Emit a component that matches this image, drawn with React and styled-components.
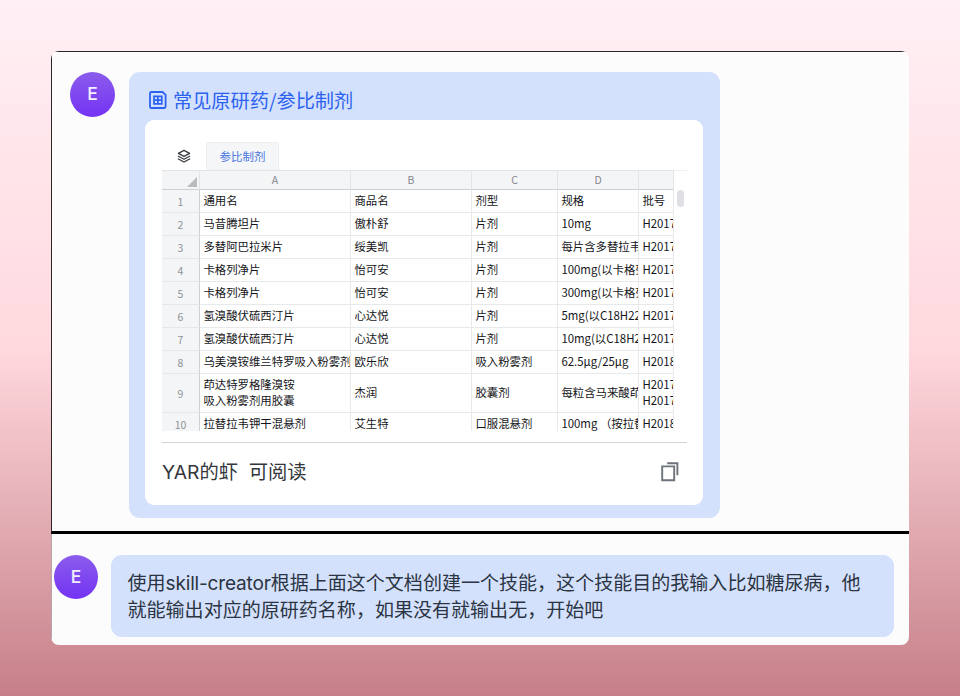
import React from "react";
import styled, { createGlobalStyle } from "styled-components";

const rows = [
  ["通用名", "商品名", "剂型", "规格", "批号"],
  ["马昔腾坦片", "傲朴舒", "片剂", "10mg", "H2017"],
  ["多替阿巴拉米片", "绥美凯", "片剂", "每片含多替拉韦", "H2017"],
  ["卡格列净片", "怡可安", "片剂", "100mg(以卡格列", "H2017"],
  ["卡格列净片", "怡可安", "片剂", "300mg(以卡格列", "H2017"],
  ["氢溴酸伏硫西汀片", "心达悦", "片剂", "5mg(以C18H22", "H2017"],
  ["氢溴酸伏硫西汀片", "心达悦", "片剂", "10mg(以C18H22", "H2017"],
  ["乌美溴铵维兰特罗吸入粉雾剂", "欧乐欣", "吸入粉雾剂", "62.5μg/25μg", "H2018"],
  [
    "茚达特罗格隆溴铵\n吸入粉雾剂用胶囊",
    "杰润",
    "胶囊剂",
    "每粒含马来酸茚",
    "H2017\nH2017",
  ],
  ["拉替拉韦钾干混悬剂", "艾生特", "口服混悬剂", "100mg （按拉替", "H2018"],
];

const SheetIcon = () => (
  <svg width="18" height="18" viewBox="0 0 18 18" fill="none" stroke="#2b62f0">
    <path
      d="M2.4 1H13.6L16.6 3.8V15.6Q16.6 17 15.2 17H2.4Q1 17 1 15.6V2.4Q1 1 2.4 1Z"
      strokeWidth="1.8"
      strokeLinejoin="round"
    />
    <path d="M5 5.4H12.8V12.8H5ZM8.9 5.4V12.8M5 9.1H12.8" strokeWidth="1.7" />
  </svg>
);

const LayersIcon = () => (
  <svg
    width="14"
    height="14"
    viewBox="0 0 14 14"
    fill="none"
    stroke="#3a3d42"
    strokeWidth="1.3"
    strokeLinejoin="round"
    strokeLinecap="round"
  >
    <path d="M7 1.4L12.6 4.4L7 7.4L1.4 4.4Z" />
    <path d="M1.4 7.2L7 10.2L12.6 7.2" />
    <path d="M1.4 10L7 13L12.6 10" />
  </svg>
);

const CopyIcon = () => (
  <svg width="18" height="20" viewBox="0 0 18 20" fill="none" stroke="#6d727b">
    <path d="M1.2 4.4H13.2V18.2H1.2Z" strokeWidth="1.9" />
    <path d="M6.2 1.3H16.4V13.2" strokeWidth="1.9" />
  </svg>
);

const App = () => {
  return (
    <>
      <GlobalStyle />
      <Page>
        <Frame>
          <DocMessage>
            <Avatar $size={45}>E</Avatar>
            <DocCard>
              <DocTitle>
                <SheetIcon />
                <span>常见原研药/参比制剂</span>
              </DocTitle>
              <Preview>
                <Tabs>
                  <LayersIcon />
                  <Tab>参比制剂</Tab>
                </Tabs>
                <SheetArea>
                  <Sheet>
                    <HeadRow>
                      <Corner />
                      <HeadCell>A</HeadCell>
                      <HeadCell>B</HeadCell>
                      <HeadCell>C</HeadCell>
                      <HeadCell>D</HeadCell>
                      <HeadCell />
                    </HeadRow>
                    {rows.map((cells, i) => (
                      <Row key={i} $tall={i === 8}>
                        <RowNumber>{i + 1}</RowNumber>
                        {cells.map((cell, j) => (
                          <Cell key={j}>{cell}</Cell>
                        ))}
                      </Row>
                    ))}
                  </Sheet>
                  <ScrollTrack>
                    <ScrollThumb />
                  </ScrollTrack>
                </SheetArea>
                <Footer>
                  <FooterText>YAR的虾&nbsp; 可阅读</FooterText>
                  <CopyIcon />
                </Footer>
              </Preview>
            </DocCard>
          </DocMessage>
          <TextMessage>
            <Avatar $size={44}>E</Avatar>
            <Bubble>
              使用<Latin>skill-creator</Latin>
              根据上面这个文档创建一个技能，这个技能目的我输入比如糖尿病，他
              <br />
              就能输出对应的原研药名称，如果没有就输出无，开始吧
            </Bubble>
          </TextMessage>
        </Frame>
      </Page>
    </>
  );
};

const GlobalStyle = createGlobalStyle`
  * {
    box-sizing: border-box;
  }

  body {
    margin: 0;
    font-family: Inter, "Noto Sans CJK SC", sans-serif;
  }

  svg {
    display: block;
    flex: none;
  }
`;

const Page = styled.div`
  height: 696px;
  padding: 51px 51px 0;
  overflow: hidden;
  background: linear-gradient(#fff0f5 0%, #ffd9de 50%, #c67f88 100%);
`;

const Frame = styled.main`
  width: 858px;
  height: 594px;
  border-radius: 8px;
  overflow: hidden;
  background: #fcfcfc;
`;

const DocMessage = styled.section`
  display: flex;
  align-items: flex-start;
  gap: 14px;
  height: 483px;
  padding: 20px 0 0 18px;
  border-top: 1px solid #2c2628;
  border-left: 1px solid #2c2628;
  border-bottom: 3px solid #000;
`;

const TextMessage = styled.section`
  display: flex;
  align-items: flex-start;
  gap: 13px;
  height: 111px;
  padding: 21px 0 0 2px;
  border-left: 1px solid #b5a5a8;
`;

const Avatar = styled.div`
  display: flex;
  flex: none;
  align-items: center;
  justify-content: center;
  width: ${(props) => props.$size}px;
  height: ${(props) => props.$size}px;
  padding-bottom: 2px;
  border-radius: 50%;
  background: linear-gradient(#8b5cec, #7433f3);
  color: #f4efff;
  font-size: 17.5px;
  font-weight: 500;
`;

const DocCard = styled.div`
  width: 591px;
  height: 446px;
  padding: 0 17px 0 16px;
  border-radius: 11px;
  background: #d4e1fc;
`;

const DocTitle = styled.div`
  display: flex;
  align-items: center;
  gap: 6px;
  height: 48px;
  padding: 8px 0 0 4px;
  color: #2b62f0;
  font-family: "Noto Sans CJK SC", sans-serif;
  font-size: 19.2px;
  line-height: 28px;

  span {
    padding-bottom: 1px;
  }
`;

const Preview = styled.div`
  height: 385px;
  padding: 22px 16px 0 17px;
  border-radius: 9px;
  background: #fff;
`;

const Tabs = styled.div`
  display: flex;
  align-items: center;
  gap: 15px;
  height: 28px;
  padding-left: 15px;
`;

const Tab = styled.div`
  display: flex;
  align-items: center;
  justify-content: center;
  width: 73px;
  height: 28px;
  padding-bottom: 2px;
  border: 1px solid #eceef0;
  border-bottom: 0;
  border-radius: 3px 3px 0 0;
  background: #f5f6f7;
  color: #4a76e0;
  font-family: "Noto Sans CJK SC", sans-serif;
  font-size: 11.5px;
  line-height: 16px;
`;

const SheetArea = styled.div`
  display: flex;
  height: 261px;
  overflow: hidden;
  font-family: "Noto Sans CJK SC", sans-serif;
  font-size: 11.4px;
`;

const Sheet = styled.div`
  width: 512px;
`;

const Row = styled.div`
  display: grid;
  grid-template-columns: 38px 151px 121px 86px 81px 35px;
  height: ${(props) => (props.$tall ? 39 : 23)}px;
`;

const HeadRow = styled(Row)`
  height: 20px;
`;

const HeadCell = styled.div`
  display: flex;
  align-items: center;
  justify-content: center;
  border: 1px solid #e3e4e6;
  border-width: 1px 1px 1px 0;
  border-bottom-color: #cfd0d2;
  background: #f4f5f7;
  color: #85888e;
  font-size: 10.5px;
  line-height: 18px;
`;

const Corner = styled(HeadCell)`
  align-items: flex-end;
  justify-content: flex-end;
  padding: 0 2px 2px 0;

  &::after {
    content: "";
    border-left: 10px solid transparent;
    border-bottom: 10px solid #b9bbc1;
  }
`;

const RowNumber = styled.div`
  display: flex;
  align-items: center;
  justify-content: center;
  padding-top: 2px;
  border-right: 1px solid #cfd0d3;
  border-bottom: 1px solid #e6e7e9;
  background: #f4f5f7;
  color: #8f9298;
  font-size: 10.5px;
  line-height: 16px;
`;

const Cell = styled.div`
  display: flex;
  align-items: center;
  min-width: 0;
  padding: 0 0 3px 3.4px;
  overflow: hidden;
  border-right: 1px solid #e8e9ea;
  border-bottom: 1px solid #e8e9ea;
  color: #141518;
  line-height: 16px;
  white-space: pre;
`;

const ScrollTrack = styled.div`
  width: 13px;
  padding: 19px 0 0 3px;
  border-top: 1px solid #eeeff0;
`;

const ScrollThumb = styled.div`
  width: 7px;
  height: 17px;
  border-radius: 4px;
  background: #dfe0e3;
`;

const Footer = styled.div`
  display: flex;
  align-items: center;
  justify-content: space-between;
  height: 58px;
  margin-top: 11px;
  padding-right: 8px;
  border-top: 1px solid #d3d4d6;
`;

const FooterText = styled.div`
  color: #34373c;
  font-size: 19.3px;
  line-height: 28px;
  white-space: pre;
`;

const Bubble = styled.div`
  width: 783px;
  height: 82px;
  padding: 15px 0 0 16.5px;
  border-radius: 11px;
  background: #d4e1fc;
  color: #2b3442;
  font-size: 19.05px;
  line-height: 27px;
  white-space: nowrap;
`;

const Latin = styled.span`
  letter-spacing: -0.18px;
`;

export default App;
